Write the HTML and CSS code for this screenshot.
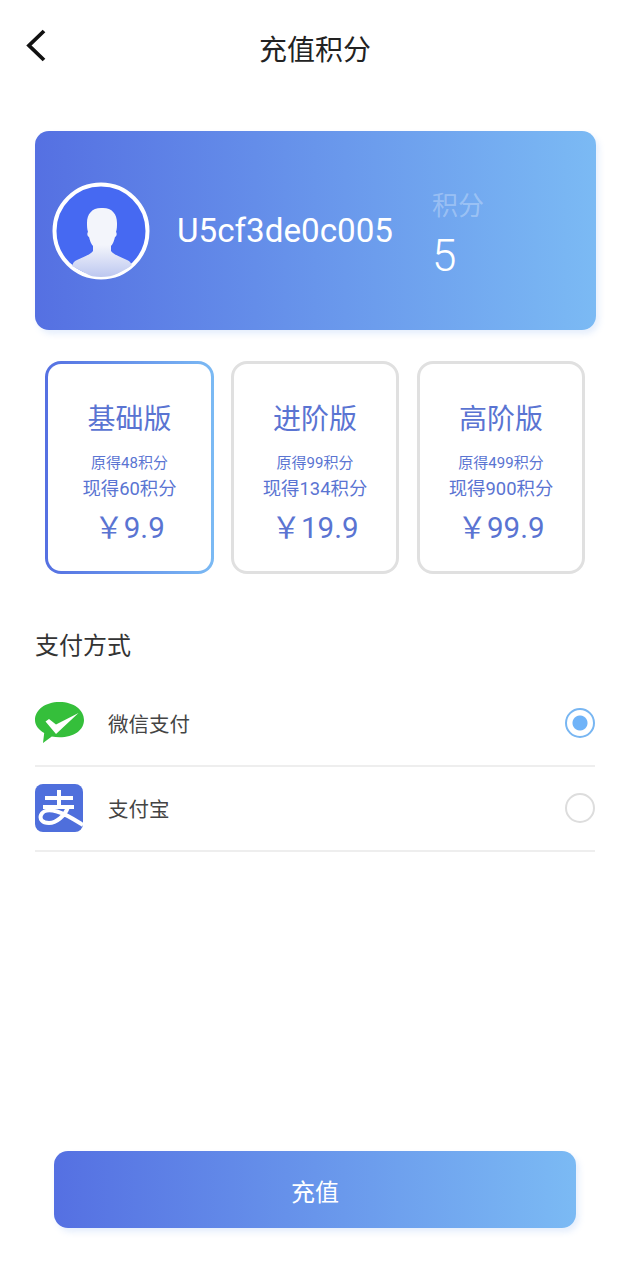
FILE: index.html
```html
<!DOCTYPE html>
<html lang="zh-CN">
<head>
  <meta charset="UTF-8">
  <title>充值积分</title>
  <link rel="stylesheet" href="styles.css">
</head>
<body>

  <header class="topbar">
    <svg class="back" width="22" height="36" viewBox="0 0 22 36">
      <path d="M19 3 L4 17.5 L19 32" fill="none" stroke="#111" stroke-width="3.8"/>
    </svg>
    <h1 class="title">充值积分</h1>
  </header>

  <section class="user-card">
    <svg class="avatar" width="98" height="98" viewBox="0 0 98 98">
      <defs>
        <linearGradient id="bust" x1="0" y1="0" x2="0" y2="1">
          <stop offset="0.5" stop-color="#f3f5fb"/>
          <stop offset="1" stop-color="#b4c0ee"/>
        </linearGradient>
        <clipPath id="round"><circle cx="49" cy="49" r="46"/></clipPath>
      </defs>
      <circle cx="49" cy="49" r="46.5" fill="#4669f2" stroke="#fff" stroke-width="4"/>
      <path clip-path="url(#round)" fill="url(#bust)" d="M49 26c-9 0-14 6-14 15 0 3 0 6 1 9-1 1-1 4 1 5 1 4 2 7 4 9v5c-3 4-10 6-16 9-3 1-4 3-5 6l30 16 30-16c-1-3-2-5-5-6-6-3-13-5-16-9v-5c2-2 3-5 4-9 2-1 2-4 1-5 1-3 1-6 1-9 0-9-5-15-14-15z"/>
    </svg>
    <div class="user-name">U5cf3de0c005</div>
    <div class="points">
      <div class="points-label">积分</div>
      <div class="points-value">5</div>
    </div>
  </section>

  <section class="plans">
    <div class="plan plan-active">
      <div class="plan-name">基础版</div>
      <div class="plan-old">原得48积分</div>
      <div class="plan-new">现得60积分</div>
      <div class="plan-price">&#xFFE5;9.9</div>
    </div>
    <div class="plan">
      <div class="plan-name">进阶版</div>
      <div class="plan-old">原得99积分</div>
      <div class="plan-new">现得134积分</div>
      <div class="plan-price">&#xFFE5;19.9</div>
    </div>
    <div class="plan">
      <div class="plan-name">高阶版</div>
      <div class="plan-old">原得499积分</div>
      <div class="plan-new">现得900积分</div>
      <div class="plan-price">&#xFFE5;99.9</div>
    </div>
  </section>

  <section class="pay">
    <h2 class="pay-title">支付方式</h2>

    <div class="pay-row">
      <svg class="pay-icon" width="49" height="42" viewBox="0 0 49 42">
        <path fill="#35bf3b" d="M24.500 0C10 0 0 8 0 18c0 5.200 3.400 9.800 9.200 13L8 41l8.800-6.500c2.400.5 5 .8 7.700.8C39 35.300 49 28 49 18S39 0 24.500 0z"/>
        <path fill="#fff" d="M10.500 19.500l3.500-2.500 7 5.500 22.500-11.500L21 32z"/>
      </svg>
      <span class="pay-name">微信支付</span>
      <span class="radio radio-on"></span>
    </div>

    <div class="pay-row">
      <svg class="pay-icon" width="48" height="48" viewBox="0 0 48 48">
        <rect width="48" height="48" rx="8" fill="#4f6fdc"/>
        <g fill="none" stroke="#fff" stroke-width="4">
          <path d="M10 14h28M24 6v17M8 23h31"/>
          <path d="M33 23C30 32 21 39 14 39 7 39 4.500 35 6 31 8 26 15 25.500 22 27.500 31 30 40 36 48 41"/>
        </g>
      </svg>
      <span class="pay-name">支付宝</span>
      <span class="radio"></span>
    </div>
  </section>

  <button class="submit" type="button">充值</button>

</body>
</html>
```

FILE: styles.css
```css
* {
  box-sizing: border-box;
}
body {
  margin: 0;
  height: 1280px;
  overflow: hidden;
  background-color: #fff;
  font-family: Roboto, "Noto Sans CJK SC", sans-serif;
}
.topbar {
  position: relative;
  height: 98px;
  padding-top: 31px;
  text-align: center;
}
.back {
  position: absolute;
  left: 25px;
  top: 28px;
}
.title {
  margin: 0;
  font-size: 28px;
  line-height: 40px;
  font-weight: 400;
  color: #222;
}

.user-card {
  display: flex;
  align-items: center;
  height: 199px;
  margin: 33px 34px 0 35px;
  padding-left: 17px;
  border-radius: 14px;
  color: #fff;
  background: linear-gradient(90deg, #5570e2, #7bbaf4);
  box-shadow: 3px 4px 6px rgba(123, 170, 240, 0.2);
}
.avatar {
  flex: none;
}
.user-name {
  width: 255px;
  margin-left: 27px;
  font-size: 33.200px;
}
.points {
  padding-top: 8px;
}
.points-label {
  font-size: 26px;
  line-height: 36px;
  color: rgba(255, 255, 255, 0.3);
}
.points-value {
  margin-top: 6px;
  font-size: 44px;
  line-height: 52px;
  font-weight: 300;
}

.plans {
  display: flex;
  gap: 18px;
  margin: 31px 45px 0;
}
.plan {
  width: 168px;
  height: 213px;
  padding-top: 36px;
  border: 3px solid #e0e0e0;
  border-radius: 16px;
  text-align: center;
  color: #5a74d2;
}
.plan-active {
  width: 169px;
  margin-right: -1px;
  border-color: transparent;
  background: linear-gradient(#fff, #fff) padding-box, linear-gradient(90deg, #5570e2, #7bbaf4) border-box;
}
.plan-name {
  font-size: 28px;
  line-height: 40px;
}
.plan-old {
  margin-top: 12px;
  font-size: 15px;
  line-height: 22px;
}
.plan-new {
  margin-top: 2px;
  font-size: 18.400px;
  line-height: 26px;
}
.plan-price {
  margin-top: 5px;
  font-size: 29.500px;
  line-height: 42px;
}

.pay {
  margin: 52px 35px 0;
}
.pay-title {
  margin: 0 0 16px;
  font-size: 24px;
  line-height: 40px;
  font-weight: 400;
  color: #333;
}
.pay-row {
  display: flex;
  align-items: center;
  height: 85px;
  padding-bottom: 2px;
  border-bottom: 2px solid #eee;
}
.pay-icon {
  flex: none;
}
.pay-name {
  margin-left: 24px;
  font-size: 20.500px;
  color: #444;
}
.pay-row:last-child .pay-name {
  margin-left: 25px;
}
.radio {
  width: 30px;
  height: 30px;
  margin-left: auto;
  border: 2px solid #ddd;
  border-radius: 50%;
}
.radio-on {
  border-color: #78b6f2;
  background: radial-gradient(circle, #6fb3f8 7px, #fff 8px);
}

.submit {
  display: block;
  width: 522px;
  height: 77px;
  margin: 299px 0 0 54px;
  padding-top: 2px;
  border: none;
  border-radius: 14px;
  font-family: inherit;
  font-size: 24px;
  color: #fff;
  background: linear-gradient(90deg, #5570e2, #7bbaf4);
  box-shadow: 3px 4px 6px rgba(123, 170, 240, 0.2);
}
```
